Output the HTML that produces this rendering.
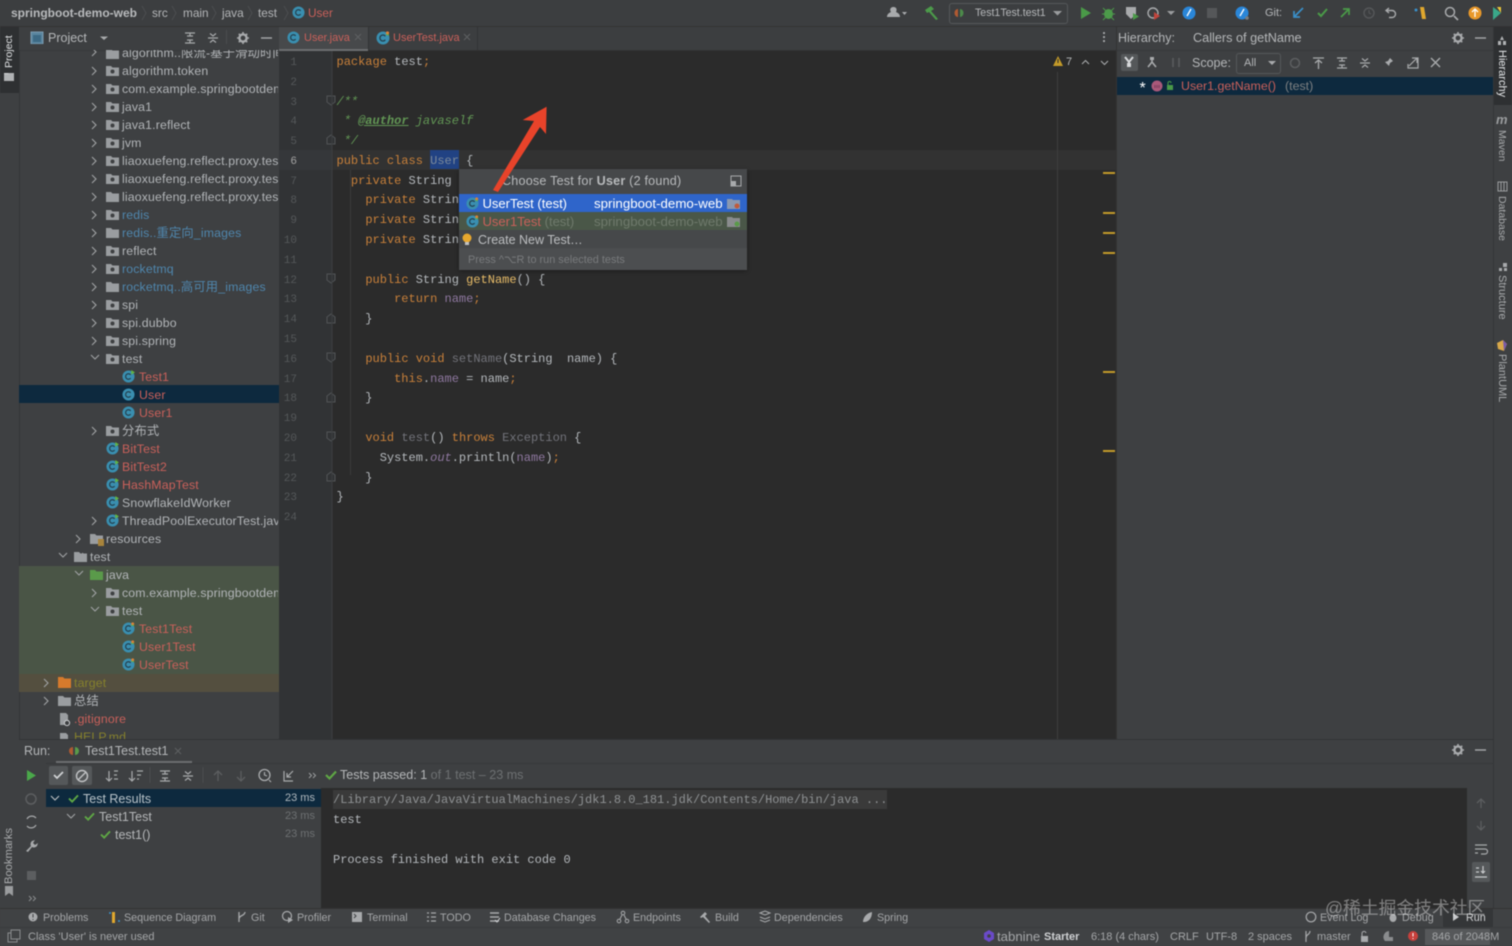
<!DOCTYPE html>
<html><head><meta charset="utf-8"><title>IDE</title>
<style>
html,body{margin:0;padding:0;background:#3e4042}
body{width:1512px;height:945px;overflow:hidden;position:relative;font-family:"Liberation Sans","Noto Sans CJK SC",sans-serif;font-size:12px;color:#b4b6b8;filter:blur(.45px)}
.b{position:absolute}
.t{position:absolute;white-space:nowrap;line-height:18px;height:18px}
.tr .t{font-size:12.3px;letter-spacing:.15px;color:#b2b5b8}
.r{color:#c9605a!important}.bl{color:#4f86ad!important}.ol{color:#86812c!important}
.c{position:absolute;white-space:pre;font-family:"Liberation Mono",monospace;font-size:12px;line-height:20px;height:20px;color:#b4b8bc;left:336.5px;margin-top:.6px}
.k{color:#c8803a}.f{color:#8f78a0}.m{color:#e8bc68}.d{color:#72737a}.g{color:#629755;font-style:italic}
.n{position:absolute;left:279px;width:18px;margin-top:1.5px;text-align:right;font-family:"Liberation Mono",monospace;font-size:11px;line-height:20px;color:#55585a}
.s{font-size:10.75px;line-height:18px;height:18px;color:#a4a6a8;position:absolute;white-space:nowrap;margin-top:.5px}
svg.i{position:absolute;left:0;top:0;z-index:5;pointer-events:none}
</style></head><body>
<!-- panels -->
<div class="b" style="left:0;top:0;width:1512px;height:26px;background:#3c3e40;border-bottom:1px solid #333"></div>
<div class="b" style="left:0;top:27px;width:19px;height:881px;background:#3e4042;border-right:1px solid #343638"></div>
<div class="b" style="left:0;top:27px;width:19px;height:66px;background:#2e3032"></div>
<div class="b" style="left:19px;top:27px;width:260px;height:23px;background:#3d3f41;border-bottom:1px solid #37393b"></div>
<div class="b" style="left:279px;top:27px;width:837px;height:23px;background:#3c3e40;border-bottom:1px solid #323232"></div>
<div class="b" style="left:279px;top:27px;width:89px;height:22px;background:#47494b;border-bottom:2px solid #6c6e70"></div>
<div class="b" style="left:368px;top:27px;width:1px;height:23px;background:#323436"></div>
<div class="b" style="left:477px;top:27px;width:1px;height:23px;background:#323436"></div>
<!-- editor -->
<div class="b" style="left:279px;top:51px;width:837px;height:688px;background:#2b2b2b"></div>
<div class="b" style="left:279px;top:51px;width:53px;height:688px;background:#313335"></div>
<div class="b" style="left:279px;top:150px;width:837px;height:20px;background:#323232"></div>
<div class="b" style="left:279px;top:150px;width:53px;height:20px;background:#35373a"></div>
<div class="b" style="left:430px;top:150px;width:29px;height:19px;background:#214283"></div>
<div class="b" style="left:1057px;top:72px;width:1px;height:667px;background:#3e3e3e"></div>
<div class="b" style="left:350px;top:170px;width:1px;height:305px;background:#3a3a3a"></div>
<div class="b" style="left:1103px;top:172px;width:12px;height:2px;background:#c39a29"></div>
<div class="b" style="left:1103px;top:212px;width:12px;height:2px;background:#c39a29"></div>
<div class="b" style="left:1103px;top:232px;width:12px;height:2px;background:#c39a29"></div>
<div class="b" style="left:1103px;top:252px;width:12px;height:2px;background:#c39a29"></div>
<div class="b" style="left:1103px;top:371px;width:12px;height:2px;background:#c39a29"></div>
<div class="b" style="left:1103px;top:450px;width:12px;height:2px;background:#c39a29"></div>
<!-- hierarchy -->
<div class="b" style="left:1116px;top:27px;width:377px;height:712px;background:#3e4042;border-left:1px solid #333"></div>
<div class="b" style="left:1117px;top:50px;width:376px;height:1px;background:#37393b"></div>
<div class="b" style="left:1117px;top:77px;width:376px;height:18px;background:#0d293e"></div>
<div class="b" style="left:1121px;top:54px;width:17px;height:17px;background:#55585a;border-radius:2px"></div>
<div class="b" style="left:1493px;top:27px;width:19px;height:881px;background:#3e4042;border-left:1px solid #343638"></div>
<div class="b" style="left:1494px;top:27px;width:18px;height:78px;background:#2e3032"></div>
<!-- line numbers -->
<div class="n" style="top:51px">1</div><div class="n" style="top:71px">2</div><div class="n" style="top:91px">3</div><div class="n" style="top:110px">4</div><div class="n" style="top:130px">5</div><div class="n" style="top:150px;color:#a4a3a3">6</div><div class="n" style="top:170px">7</div><div class="n" style="top:189px">8</div><div class="n" style="top:209px">9</div><div class="n" style="top:229px">10</div><div class="n" style="top:249px">11</div><div class="n" style="top:269px">12</div><div class="n" style="top:288px">13</div><div class="n" style="top:308px">14</div><div class="n" style="top:328px">15</div><div class="n" style="top:348px">16</div><div class="n" style="top:368px">17</div><div class="n" style="top:387px">18</div><div class="n" style="top:407px">19</div><div class="n" style="top:427px">20</div><div class="n" style="top:447px">21</div><div class="n" style="top:467px">22</div><div class="n" style="top:486px">23</div><div class="n" style="top:506px">24</div>
<!-- code -->
<div class="c" style="top:51px"><span class="k">package</span> test<span class="k">;</span></div>
<div class="c" style="top:91px"><span class="g">/**</span></div>
<div class="c" style="top:110px"><span class="g"> * <b style="text-decoration:underline">@author</b> javaself</span></div>
<div class="c" style="top:130px"><span class="g"> */</span></div>
<div class="c" style="top:150px"><span class="k">public class</span> <span style="color:#7c8a9a">User</span> {</div>
<div class="c" style="top:170px">  <span class="k">private</span> String</div>
<div class="c" style="top:189px">    <span class="k">private</span> Strin</div>
<div class="c" style="top:209px">    <span class="k">private</span> Strin</div>
<div class="c" style="top:229px">    <span class="k">private</span> Strin</div>
<div class="c" style="top:269px">    <span class="k">public</span> String <span class="m">getName</span>() {</div>
<div class="c" style="top:288px">        <span class="k">return</span> <span class="f">name</span><span class="k">;</span></div>
<div class="c" style="top:308px">    }</div>
<div class="c" style="top:348px">    <span class="k">public void</span> <span class="d">setName</span>(String  name) {</div>
<div class="c" style="top:368px">        <span class="k">this</span>.<span class="f">name</span> = name<span class="k">;</span></div>
<div class="c" style="top:387px">    }</div>
<div class="c" style="top:427px">    <span class="k">void</span> <span class="d">test</span>() <span class="k">throws</span> <span class="d">Exception</span> {</div>
<div class="c" style="top:447px">      System.<span class="f" style="font-style:italic">out</span>.println(<span class="f">name</span>)<span class="k">;</span></div>
<div class="c" style="top:467px">    }</div>
<div class="c" style="top:486px">}</div>
<!-- top bar text -->
<div class="t" style="left:11px;top:4px;font-size:12px;font-weight:bold;color:#b8babc">springboot-demo-web</div>
<div class="t" style="left:152px;top:4px;font-size:11.8px">src</div>
<div class="t" style="left:183px;top:4px;font-size:11.8px">main</div>
<div class="t" style="left:222px;top:4px;font-size:11.8px">java</div>
<div class="t" style="left:258px;top:4px;font-size:11.8px">test</div>
<div class="t r" style="left:308px;top:4px;font-size:11.8px">User</div>
<div class="b" style="left:949px;top:3px;width:117px;height:19px;border:1px solid #55585a;border-radius:3px"></div>
<div class="t" style="left:975px;top:4px;font-size:10.6px">Test1Test.test1</div>
<div class="t" style="left:1265px;top:4px;font-size:11px">Git:</div>
<!-- project header -->
<div class="t" style="left:48px;top:29px;font-size:12.5px">Project</div>
<div class="t r" style="left:304px;top:29px;font-size:11px">User.java</div>
<div class="t r" style="left:393px;top:29px;font-size:11px">UserTest.java</div>
<div class="t" style="left:1118px;top:29px;font-size:12.5px">Hierarchy:</div>
<div class="t" style="left:1193px;top:29px;font-size:12.7px">Callers of getName</div>
<div class="t" style="left:1066px;top:53px;font-size:11px">7</div>
<div class="t" style="left:1192px;top:54px;font-size:12.5px">Scope:</div>
<div class="b" style="left:1236px;top:53px;width:43px;height:19px;border:1px solid #55585a;border-radius:3px"></div>
<div class="t" style="left:1244px;top:54px;font-size:11px">All</div>
<div class="t r" style="left:1181px;top:77px;font-size:12.4px">User1.getName()</div>
<div class="t" style="left:1285px;top:77px;font-size:12.4px;color:#7d8082">(test)</div>
<!-- vertical labels -->
<div class="t" style="left:0;top:26px;width:19px;height:42px;writing-mode:vertical-rl;transform:rotate(180deg);font-size:10.5px;line-height:19px;color:#e0e2e4;text-align:left">Project</div>
<div class="t" style="left:0;top:828px;width:19px;height:56px;writing-mode:vertical-rl;transform:rotate(180deg);font-size:11.2px;line-height:19px;color:#a8aaac">Bookmarks</div>
<div class="t" style="left:1493px;top:50px;width:18px;height:50px;writing-mode:vertical-rl;font-size:11px;line-height:18px;color:#e4e6e8">Hierarchy</div>
<div class="t" style="left:1493px;top:130px;width:18px;height:40px;writing-mode:vertical-rl;font-size:10.5px;line-height:18px;color:#a8aaac">Maven</div>
<div class="t" style="left:1493px;top:196px;width:18px;height:50px;writing-mode:vertical-rl;font-size:10.5px;line-height:18px;color:#a8aaac">Database</div>
<div class="t" style="left:1493px;top:275px;width:18px;height:50px;writing-mode:vertical-rl;font-size:11px;line-height:18px;color:#a8aaac">Structure</div>
<div class="t" style="left:1493px;top:354px;width:18px;height:50px;writing-mode:vertical-rl;font-size:11px;line-height:18px;color:#a8aaac">PlantUML</div>
<!-- project tree backgrounds -->
<div class="b" style="left:19px;top:385px;width:260px;height:18px;background:#0d293e"></div>
<div class="b" style="left:19px;top:566px;width:260px;height:108px;background:#4a5546"></div>
<div class="b" style="left:19px;top:674px;width:260px;height:18px;background:#544f3f"></div>
<!-- project tree -->
<div class="b tr" style="left:0;top:0;width:278px;height:739px;clip-path:inset(50px 0 0 19px);overflow:hidden">
<div class="t" style="left:122px;top:44px">algorithm..限流-基于滑动时间窗口</div>
<div class="t" style="left:122px;top:62px">algorithm.token</div>
<div class="t" style="left:122px;top:80px">com.example.springbootdemo</div>
<div class="t" style="left:122px;top:98px">java1</div>
<div class="t" style="left:122px;top:116px">java1.reflect</div>
<div class="t" style="left:122px;top:134px">jvm</div>
<div class="t" style="left:122px;top:152px">liaoxuefeng.reflect.proxy.test</div>
<div class="t" style="left:122px;top:170px">liaoxuefeng.reflect.proxy.test</div>
<div class="t" style="left:122px;top:188px">liaoxuefeng.reflect.proxy.test</div>
<div class="t bl" style="left:122px;top:206px">redis</div>
<div class="t bl" style="left:122px;top:224px">redis..重定向_images</div>
<div class="t" style="left:122px;top:242px">reflect</div>
<div class="t bl" style="left:122px;top:260px">rocketmq</div>
<div class="t bl" style="left:122px;top:278px">rocketmq..高可用_images</div>
<div class="t" style="left:122px;top:296px">spi</div>
<div class="t" style="left:122px;top:314px">spi.dubbo</div>
<div class="t" style="left:122px;top:332px">spi.spring</div>
<div class="t" style="left:122px;top:350px">test</div>
<div class="t r" style="left:139px;top:368px">Test1</div>
<div class="t r" style="left:139px;top:386px">User</div>
<div class="t r" style="left:139px;top:404px">User1</div>
<div class="t" style="left:122px;top:422px">分布式</div>
<div class="t r" style="left:122px;top:440px">BitTest</div>
<div class="t r" style="left:122px;top:458px">BitTest2</div>
<div class="t r" style="left:122px;top:476px">HashMapTest</div>
<div class="t" style="left:122px;top:494px">SnowflakeIdWorker</div>
<div class="t" style="left:122px;top:512px">ThreadPoolExecutorTest.java</div>
<div class="t" style="left:106px;top:530px">resources</div>
<div class="t" style="left:90px;top:548px">test</div>
<div class="t" style="left:106px;top:566px">java</div>
<div class="t" style="left:122px;top:584px">com.example.springbootdemo</div>
<div class="t" style="left:122px;top:602px">test</div>
<div class="t r" style="left:139px;top:620px">Test1Test</div>
<div class="t r" style="left:139px;top:638px">User1Test</div>
<div class="t r" style="left:139px;top:656px">UserTest</div>
<div class="t ol" style="left:74px;top:674px">target</div>
<div class="t" style="left:74px;top:692px">总结</div>
<div class="t r" style="left:74px;top:710px">.gitignore</div>
<div class="t ol" style="left:74px;top:728px">HELP.md</div>
</div>
<!-- run panel -->
<div class="b" style="left:19px;top:739px;width:1474px;height:169px;background:#3e4042;border-top:1px solid #323436"></div>
<div class="b" style="left:56px;top:761px;width:136px;height:2px;background:#6c6e70"></div>
<div class="b" style="left:46px;top:763px;width:1447px;height:1px;background:#37393b"></div>
<div class="b" style="left:321px;top:788px;width:1146px;height:120px;background:#2b2b2b"></div>
<div class="b" style="left:333px;top:790px;width:554px;height:19px;background:#3a3a3a"></div>
<div class="b" style="left:46px;top:789px;width:275px;height:18px;background:#0d293e"></div>
<div class="b" style="left:49px;top:766px;width:19px;height:19px;background:#55585a;border-radius:2px"></div>
<div class="b" style="left:72px;top:766px;width:20px;height:19px;background:#55585a;border-radius:2px"></div>
<div class="b" style="left:1472px;top:862px;width:18px;height:20px;background:#55585a;border-radius:2px"></div>
<div class="t" style="left:24px;top:742px;font-size:12.5px">Run:</div>
<div class="t" style="left:85px;top:742px;font-size:12.5px">Test1Test.test1</div>
<div class="t" style="left:340px;top:766px;font-size:12.55px">Tests passed: 1 <span style="color:#6d7072">of 1 test – 23 ms</span></div>
<div class="t" style="left:83px;top:790px;font-size:12.5px;color:#b8c2c8">Test Results</div>
<div class="t" style="left:99px;top:808px;font-size:12.5px">Test1Test</div>
<div class="t" style="left:115px;top:826px;font-size:12.5px">test1()</div>
<div class="t" style="left:285px;top:789px;font-size:11px;color:#b0b8be">23 ms</div>
<div class="t" style="left:285px;top:807px;font-size:11px;color:#6d7072">23 ms</div>
<div class="t" style="left:285px;top:825px;font-size:11px;color:#6d7072">23 ms</div>
<div class="c" style="left:333px;top:789px;color:#8f9294">/Library/Java/JavaVirtualMachines/jdk1.8.0_181.jdk/Contents/Home/bin/java ...</div>
<div class="c" style="left:333px;top:809px">test</div>
<div class="c" style="left:333px;top:849px">Process finished with exit code 0</div>
<!-- bottom bars -->
<div class="b" style="left:0;top:908px;width:1512px;height:37px;background:#404244;border-top:1px solid #333"></div>
<div class="b" style="left:1443px;top:909px;width:50px;height:18px;background:#343638"></div>
<div class="b" style="left:0;top:927px;width:1512px;height:1px;background:#3a3c3e"></div>
<div class="b" style="left:1425px;top:929px;width:65px;height:16px;background:#56585a"></div>
<div class="s" style="left:43px;top:908px">Problems</div>
<div class="s" style="left:124px;top:908px">Sequence Diagram</div>
<div class="s" style="left:251px;top:908px">Git</div>
<div class="s" style="left:297px;top:908px">Profiler</div>
<div class="s" style="left:367px;top:908px">Terminal</div>
<div class="s" style="left:440px;top:908px">TODO</div>
<div class="s" style="left:504px;top:908px">Database Changes</div>
<div class="s" style="left:633px;top:908px">Endpoints</div>
<div class="s" style="left:715px;top:908px">Build</div>
<div class="s" style="left:774px;top:908px">Dependencies</div>
<div class="s" style="left:877px;top:908px">Spring</div>
<div class="s" style="left:1320px;top:908px">Event Log</div>
<div class="s" style="left:1402px;top:908px">Debug</div>
<div class="s" style="left:1466px;top:908px;color:#d0d2d4">Run</div>
<div class="s" style="left:28px;top:927px;font-size:11px">Class 'User' is never used</div>
<div class="s" style="left:997px;top:927px;font-size:13.2px">tabnine</div>
<div class="s" style="left:1044px;top:927px;font-size:11px;font-weight:bold;color:#cfd1d3">Starter</div>
<div class="s" style="left:1091px;top:927px;font-size:11px">6:18 (4 chars)</div>
<div class="s" style="left:1170px;top:927px;font-size:11px">CRLF</div>
<div class="s" style="left:1206px;top:927px;font-size:11px">UTF-8</div>
<div class="s" style="left:1248px;top:927px;font-size:11px">2 spaces</div>
<div class="s" style="left:1317px;top:927px;font-size:11px">master</div>
<div class="s" style="left:1432px;top:927px;font-size:11px">846 of 2048M</div>
<!-- icons -->
<svg class="i" width="1512" height="945" viewBox="0 0 1512 945" fill="none">
<defs>
<symbol id="fo" viewBox="0 0 13 11" overflow="visible"><path d="M0 1h5l1.5 1.5H13V11H0z" fill="#9a9da0"/></symbol>
<symbol id="pk" viewBox="0 0 13 11" overflow="visible"><path d="M0 1h5l1.5 1.5H13V11H0z" fill="#9a9da0"/><circle cx="6.5" cy="6.500" r="2" fill="#3d3f41"/></symbol>
<symbol id="cl" viewBox="0 0 14 14" overflow="visible"><circle cx="7" cy="7" r="6.5" fill="#3a8fb0"/><path d="M9.3 5.2a3 3 0 1 0 0 3.6" stroke="#24404e" stroke-width="1.3"/></symbol>
<symbol id="cr" viewBox="0 0 14 14" overflow="visible"><circle cx="7" cy="7" r="6.5" fill="#3a8fb0"/><path d="M9.3 5.2a3 3 0 1 0 0 3.6" stroke="#24404e" stroke-width="1.3"/><path d="M10 0l4 2.500-4 2.500z" fill="#62b543"/></symbol>
<symbol id="co" viewBox="0 0 14 14" overflow="visible"><circle cx="7" cy="7" r="6.5" fill="#3a8fb0"/><path d="M9.3 5.2a3 3 0 1 0 0 3.6" stroke="#24404e" stroke-width="1.3"/><circle cx="11.5" cy="2" r="1.6" fill="#d9823a"/><path d="M10 3.5l3 .5" stroke="#62b543"/></symbol>
<symbol id="gear" viewBox="0 0 12 12" overflow="visible"><circle cx="6" cy="6" r="3.6" stroke="#a8aaac" stroke-width="2.4"/><path d="M6 0v2.4M6 9.6V12M0 6h2.4M9.6 6H12M1.8 1.8l1.7 1.7M8.5 8.5l1.7 1.7M10.2 1.8L8.5 3.5M3.5 8.5l-1.7 1.7" stroke="#a8aaac" stroke-width="1.6"/></symbol>
<symbol id="ck" viewBox="0 0 12 10" overflow="visible"><path d="M1 5l3.500 3.500L11 1.500" stroke="#5fa845" stroke-width="2.100"/></symbol>
<symbol id="ca" viewBox="0 0 12 12" overflow="visible"><path d="M1 1h10M1 11h10M3 4h6M3 8h6M6 1.500v3M6 7.500v3" stroke="#a8aaac" stroke-width="1.200"/></symbol>
<symbol id="ce" viewBox="0 0 12 12" overflow="visible"><path d="M1 6h10M3 1.500L6 4l3-2.500M3 10.500L6 8l3 2.500" stroke="#a8aaac" stroke-width="1.200"/></symbol>
</defs>
<!-- breadcrumb chevrons -->
<g stroke="#4c4e50" stroke-width="1"><path d="M142 6l4 7-4 7M172 6l4 7-4 7M212 6l4 7-4 7M248 6l4 7-4 7M284 6l4 7-4 7"/></g>
<use href="#cl" x="292" y="6" width="13" height="13"/>
<!-- toolbar -->
<path d="M887 17c0-3 2-4 4-5-2-3 0-5 2.500-5s4 2 2.500 5c2 1 4 2 4 5z" fill="#a8aaac"/><path d="M902 12l5 0-2.500 3z" fill="#a8aaac"/>
<path d="M925 10l6-4 3 3-3 2 7 8-2 1-7-8-2 1z" fill="#4c9a4a"/>
<path d="M958 9a3.500 4 0 0 0 0 8z" fill="#b05a32"/><path d="M960 9a3.500 4 0 0 1 0 8z" fill="#4c8a4a"/>
<path d="M1053 11h9l-4.500 4.500z" fill="#9a9c9e"/>
<path d="M1081 7l10 6-10 6z" fill="#4a9a48"/>
<ellipse cx="1108.500" cy="14" rx="4.500" ry="5" fill="#4c9a4a"/><path d="M1103 8l3 3M1114 8l-3 3M1102 14h3M1112 14h3M1103 20l3-3M1114 20l-3-3" stroke="#4c9a4a"/>
<path d="M1126 7h10v7l-5 5-5-5z" fill="#a8aaac"/><path d="M1133 13l6 3.500-6 3.500z" fill="#4a9a48"/>
<circle cx="1153" cy="13" r="5" stroke="#a8aaac" stroke-width="1.400"/><path d="M1154 12l6 4-6 4z" fill="#c0443c"/>
<path d="M1167 11h8l-4 4z" fill="#9a9c9e"/>
<circle cx="1189" cy="13" r="6.500" fill="#2a86d8"/><path d="M1187 16l4-7" stroke="#fff" stroke-width="1.300"/>
<rect x="1207" y="8" width="10" height="10" fill="#555759"/>
<circle cx="1242" cy="13" r="6.500" fill="#2a86d8"/><path d="M1240 16l4-7" stroke="#fff" stroke-width="1.300"/><circle cx="1247" cy="18" r="1.800" fill="#7a7c7e"/>
<path d="M1303 8l-8 8M1294 11v6h6" stroke="#3a8fc8" stroke-width="1.700"/>
<path d="M1318 13l3 3 6-7" stroke="#4a9a48" stroke-width="2"/>
<path d="M1341 17l8-8M1343 9h6v6" stroke="#4a9a48" stroke-width="1.700"/>
<circle cx="1369" cy="13" r="5" stroke="#555759" stroke-width="1.400"/><path d="M1369 10v3l2 1" stroke="#555759"/>
<path d="M1389 8l-3 2.500 3 2.500M1386 10.500h6a3.500 3.500 0 0 1 0 7h-3" stroke="#a8aaac" stroke-width="1.400"/>
<path d="M1420 7h4l2 12h-4z" fill="#e0a82e"/><circle cx="1416" cy="10" r="1.500" fill="#3a8fc8"/>
<circle cx="1450" cy="12" r="4.500" stroke="#a8aaac" stroke-width="1.500"/><path d="M1454 16l4 4" stroke="#a8aaac" stroke-width="1.700"/>
<circle cx="1475" cy="13" r="6.500" fill="#e8982a"/><path d="M1475 17V9M1472 12l3-3 3 3" stroke="#fff" stroke-width="1.300"/>
<path d="M1493 7l8 6-8 7z" fill="#3aa88a"/><path d="M1497 7h4v6z" fill="#e8c53a"/>
<!-- project header icons -->
<rect x="31" y="32" width="12" height="12" fill="#5a86a0" stroke="#7a9ab0"/><rect x="33" y="35" width="8" height="7" fill="#3d6a85"/>
<path d="M100 36.500h8l-4 3.500z" fill="#a8aaac"/>
<use href="#ca" x="184" y="32" width="12" height="12"/><use href="#ce" x="207" y="32" width="12" height="12"/>
<path d="M226.500 30v16" stroke="#4a4c4e"/>
<use href="#gear" x="237" y="32" width="12" height="12"/><path d="M261 38h11" stroke="#a8aaac" stroke-width="1.400"/>
<!-- tab icons -->
<use href="#cl" x="287" y="31" width="13" height="13"/><use href="#co" x="376" y="31" width="14" height="14"/>
<path d="M355 34l6 6M361 34l-6 6M464 34l6 6M470 34l-6 6" stroke="#5e6062"/>
<path d="M1104 33v.1M1104 37v.1M1104 41v.1" stroke="#b0b2b4" stroke-width="2" stroke-linecap="round"/>
<!-- fold markers -->
<g stroke="#515456" fill="#313335"><path d="M327 96h8v6l-4 3-4-3zM327 144h8v-6l-4-3-4 3zM327 274h8v6l-4 3-4-3zM327 323h8v-6l-4-3-4 3zM327 353h8v6l-4 3-4-3zM327 402h8v-6l-4-3-4 3zM327 432h8v6l-4 3-4-3zM327 481h8v-6l-4-3-4 3z"/></g>
<path d="M332 51v688" stroke="#3d3f41"/>
<!-- warnings -->
<path d="M1058 56l5 10h-10z" fill="#c39a29"/><path d="M1058 59v4" stroke="#2b2b2b"/>
<path d="M1082 64l3.500-3.500 3.500 3.500M1101 61l3.500 3.500 3.500-3.500" stroke="#a8aaac" stroke-width="1.100"/>
<!-- tree -->
<g stroke="#a0a2a4" stroke-width="1.100">
<path d="M92 48l4 4-4 4M92 67l4 4-4 4M92 85l4 4-4 4M92 103l4 4-4 4M92 121l4 4-4 4M92 139l4 4-4 4M92 157l4 4-4 4M92 175l4 4-4 4M92 193l4 4-4 4M92 211l4 4-4 4M92 229l4 4-4 4M92 247l4 4-4 4M92 265l4 4-4 4M92 283l4 4-4 4M92 301l4 4-4 4M92 319l4 4-4 4M92 337l4 4-4 4M92 427l4 4-4 4M92 517l4 4-4 4M76 535l4 4-4 4M92 589l4 4-4 4M44 679l4 4-4 4M44 697l4 4-4 4"/>
<path d="M91 357l4 4 4-4M75 555l4 4 4-4M59 555l4 4 4-4M75 573l4 4 4-4M91 609l4 4 4-4" transform="translate(0,-2)"/>
</g>
<use href="#fo" x="106" y="48" width="13" height="11"/>
<use href="#pk" x="106" y="65" width="13" height="11"/><use href="#pk" x="106" y="83" width="13" height="11"/><use href="#pk" x="106" y="101" width="13" height="11"/><use href="#pk" x="106" y="119" width="13" height="11"/><use href="#pk" x="106" y="137" width="13" height="11"/><use href="#pk" x="106" y="155" width="13" height="11"/><use href="#pk" x="106" y="173" width="13" height="11"/><use href="#fo" x="106" y="191" width="13" height="11"/><use href="#pk" x="106" y="209" width="13" height="11"/><use href="#fo" x="106" y="227" width="13" height="11"/><use href="#pk" x="106" y="245" width="13" height="11"/><use href="#pk" x="106" y="263" width="13" height="11"/><use href="#fo" x="106" y="281" width="13" height="11"/><use href="#pk" x="106" y="299" width="13" height="11"/><use href="#pk" x="106" y="317" width="13" height="11"/><use href="#pk" x="106" y="335" width="13" height="11"/><use href="#pk" x="106" y="353" width="13" height="11"/><use href="#pk" x="106" y="425" width="13" height="11"/><use href="#pk" x="106" y="587" width="13" height="11"/><use href="#pk" x="106" y="605" width="13" height="11"/>
<rect x="19" y="44" width="260" height="6" fill="#3d3f41"/>
<use href="#cr" x="122" y="370" width="13" height="13"/><use href="#cl" x="122" y="388" width="13" height="13"/><use href="#cl" x="122" y="406" width="13" height="13"/>
<use href="#cr" x="106" y="442" width="13" height="13"/><use href="#cr" x="106" y="460" width="13" height="13"/><use href="#cr" x="106" y="478" width="13" height="13"/><use href="#cr" x="106" y="496" width="13" height="13"/><use href="#cr" x="106" y="514" width="13" height="13"/>
<use href="#fo" x="90" y="533" width="13" height="11"/><rect x="98" y="539" width="6" height="7" fill="#a8843c"/>
<use href="#fo" x="74" y="551" width="13" height="11"/>
<path d="M90 570h5l1.500 1.500H103V580H90z" fill="#5a9a4a"/>
<use href="#co" x="122" y="622" width="13" height="13"/><use href="#co" x="122" y="640" width="13" height="13"/><use href="#co" x="122" y="658" width="13" height="13"/>
<path d="M58 677h5l1.500 1.500H71V688H58z" fill="#d67a2c"/>
<use href="#fo" x="58" y="695" width="13" height="11"/>
<path d="M60 713h6l2 2v5h1v5h-9z" fill="#9a9da0"/><circle cx="67" cy="723" r="2.600" stroke="#c8cacc" fill="#3d3f41"/>
<path d="M60 739v-6h6l2 2v4z" fill="#9a9da0"/>
<!-- hierarchy icons -->
<use href="#gear" x="1452" y="32" width="12" height="12"/><path d="M1475 38h11" stroke="#a8aaac" stroke-width="1.400"/>
<path d="M1125 57l4 5 4-5M1129 62v4" stroke="#d6d8da" stroke-width="2"/><rect x="1127" y="63" width="4" height="4" fill="#d6d8da"/>
<path d="M1152 58v4M1148 67l4-5 4 5" stroke="#a8aaac" stroke-width="1.600"/><rect x="1150" y="57" width="4" height="3" fill="#a8aaac"/>
<path d="M1173 58v9M1179 58v9" stroke="#5c5e60" stroke-width="1.500"/>
<path d="M1268 61h8l-4 4z" fill="#a8aaac"/>
<circle cx="1295" cy="63" r="4.500" stroke="#5c5e60" stroke-width="1.500"/>
<path d="M1313 58h11M1318.500 69v-8M1315 63l3.500-3 3.500 3" stroke="#a8aaac" stroke-width="1.300"/>
<use href="#ca" x="1336" y="57" width="12" height="12"/><use href="#ce" x="1359" y="57" width="12" height="12"/>
<path d="M1384 68l3-4-2-2 3-1 2-3 3 3-3 2-1 3-2-2z" fill="#a8aaac"/>
<path d="M1414 58h4v10h-10v-4M1409 66l8-8M1412 58h5v5" stroke="#a8aaac" stroke-width="1.200"/>
<path d="M1431 58l9 9M1440 58l-9 9" stroke="#a8aaac" stroke-width="1.400"/>
<text x="1139.500" y="93" font-size="16" fill="#fff" font-family="Liberation Sans">*</text>
<circle cx="1157" cy="86" r="5.500" fill="#a8587a"/><path d="M1155 88v-3m2 3v-3m2 3v-3" stroke="#6a3450" stroke-width=".8"/>
<rect x="1167" y="85" width="6" height="5" fill="#4a9a48"/><path d="M1168 85v-2a1.500 1.500 0 0 1 3 0" stroke="#4a9a48"/>
<!-- stripe icons -->
<rect x="4" y="73" width="10" height="8" fill="#b0b2b4"/><path d="M4 73h4l1 1H4z" fill="#d0d2d4"/>
<path d="M1502 36l-2 4h4zM1498 41h3v4h-3zM1503 41h3v4h-3z" fill="#b0b2b4"/>
<rect x="1498" y="182" width="9" height="9" fill="none" stroke="#9a9c9e"/><path d="M1501 182v9M1504 182v9" stroke="#9a9c9e"/>
<path d="M1503 263h4v4h-4zM1499 268h3v3h-3zM1504 268h3v3h-3z" fill="#a8aaac"/>
<path d="M1497 343l6-3 4 4-3 7-6-2z" fill="#d8a84a"/><path d="M1503 340l4 4-3 7z" fill="#7a5aa8"/>
<path d="M5 886h8v10l-4-3-4 3z" fill="#9a9c9e"/>
</svg>
<!-- italic m for maven as text -->
<div class="t" style="left:1496px;top:111px;font-size:13px;font-weight:bold;font-style:italic;color:#9a9c9e;z-index:6">m</div>
<!-- run icons -->
<svg class="i" width="1512" height="945" viewBox="0 0 1512 945" fill="none" style="z-index:6">
<path d="M73 747a4 4 0 0 0 0 8z" fill="#b05a32"/><path d="M75 747a4 4 0 0 1 0 8z" fill="#5a9a4a"/>
<path d="M175 748l6 6M181 748l-6 6" stroke="#5e6062"/>
<path d="M27 770l9 5.500-9 5.500z" fill="#4aa84a"/>
<path d="M54 775l3 3 6-6" stroke="#d0d2d4" stroke-width="1.700"/>
<circle cx="82" cy="776" r="5.500" stroke="#c0c2c4" stroke-width="1.400"/><path d="M78 780l8-8" stroke="#c0c2c4" stroke-width="1.400"/>
<path d="M109 771v10M106 778l3 3 3-3M114 771h4M114 775h3M114 779h4M132 771v10M129 778l3 3 3-3M137 771h6M137 775h4M137 779h2" stroke="#a8aaac" stroke-width="1.200"/>
<use href="#ca" x="159" y="770" width="12" height="12"/><use href="#ce" x="182" y="770" width="12" height="12"/>
<path d="M150 767v16M203 767v16" stroke="#4a4c4e"/>
<path d="M218 781v-10M214 775l4-4 4 4M241 771v10M237 777l4 4 4-4" stroke="#5c5e60" stroke-width="1.300"/>
<circle cx="264.500" cy="775" r="5.500" stroke="#a8aaac" stroke-width="1.300"/><path d="M264.500 772v3l2.500 1M269 780l2 2" stroke="#a8aaac" stroke-width="1.200"/>
<path d="M284 771v10h9M293 771l-6 6M287 773v4h4" stroke="#a8aaac" stroke-width="1.200"/>
<path d="M309 773l2.500 2.500-2.500 2.500M313 773l2.500 2.500-2.500 2.500" stroke="#9a9c9e"/>
<use href="#ck" x="325" y="770" width="12" height="10"/>
<use href="#ck" x="68" y="794" width="11" height="9"/><use href="#ck" x="84" y="812" width="11" height="9"/><use href="#ck" x="100" y="830" width="11" height="9"/>
<path d="M51 796l4 4 4-4" stroke="#c0c2c4" stroke-width="1.100"/><path d="M67 814l4 4 4-4" stroke="#a0a2a4" stroke-width="1.100"/>
<circle cx="31" cy="799" r="5" stroke="#5c5e60" stroke-width="1.500"/>
<path d="M27 819a5.500 5.500 0 0 1 9-1M36 825a5.500 5.500 0 0 1-9 1" stroke="#a8aaac" stroke-width="1.300"/>
<path d="M26 851l5-5a4 4 0 0 1 1-5l3-1-2 3 2 2 3-2-1 3a4 4 0 0 1-5 1l-4 5z" fill="#a8aaac"/>
<rect x="27" y="871" width="9" height="9" fill="#5c5e60"/>
<path d="M29 896l2.500 2.500-2.500 2.500M33 896l2.500 2.500-2.500 2.500" stroke="#8a8c8e"/>
<use href="#gear" x="1452" y="744" width="12" height="12"/><path d="M1475 750h11" stroke="#a8aaac" stroke-width="1.400"/>
<path d="M1481 808v-9M1477 803l4-4 4 4M1481 821v9M1477 826l4 4 4-4" stroke="#5c5e60" stroke-width="1.300"/>
<path d="M1475 845h12M1475 849h10a2 2 0 0 1 0 5h-4M1475 853h3" stroke="#a8aaac" stroke-width="1.200"/>
<path d="M1476 868h3M1476 872h3M1483 866v7M1481 871l2 2 2-2M1475 877h12" stroke="#c8cacc" stroke-width="1.200"/>
<!-- bottom icons -->
<circle cx="33" cy="917" r="4.500" fill="#a8aaac"/><path d="M33 914v3.500M33 919v1" stroke="#404244"/>
<path d="M112 912h3v11h-3z" fill="#e0a82e"/><circle cx="110" cy="913" r="1" fill="#3a8fc8"/><circle cx="119" cy="921" r="1" fill="#3a8fc8"/>
<path d="M239 912v10M245 912c0 4-6 3-6 7" stroke="#a8aaac" stroke-width="1.300"/>
<circle cx="287" cy="916" r="4.500" stroke="#a8aaac" stroke-width="1.200"/><path d="M288 917l5 3-5 3z" fill="#a8aaac"/>
<rect x="352" y="912" width="10" height="10" fill="#a8aaac"/><path d="M354 914l2 2-2 2" stroke="#404244"/>
<path d="M427 913h2M427 917h2M427 921h2M431 913h5M431 917h5M431 921h5" stroke="#a8aaac" stroke-width="1.200"/>
<path d="M490 913h9M490 917h9M490 921h9" stroke="#a8aaac" stroke-width="1.600"/><path d="M495 920l2 2 3-4" stroke="#cfd1d3"/>
<circle cx="619" cy="921" r="1.800" stroke="#a8aaac"/><circle cx="627" cy="921" r="1.800" stroke="#a8aaac"/><circle cx="623" cy="913" r="1.800" stroke="#a8aaac"/><path d="M620 919l2-4M626 919l-2-4" stroke="#a8aaac"/>
<path d="M700 917l5-5 2 2-2 2 5 6-1 1-6-6-2 1z" fill="#a8aaac"/>
<path d="M760 913l5-2 5 2-5 2zM760 917l5 2 5-2M760 920l5 2 5-2" stroke="#a8aaac"/>
<path d="M863 922c0-5 4-9 9-10 0 6-3 10-8 10z" fill="#a8aaac"/>
<circle cx="1311" cy="917" r="4.800" stroke="#a8aaac" stroke-width="1.200"/>
<ellipse cx="1393" cy="918" rx="3.500" ry="4" fill="#a8aaac"/>
<path d="M1453 913l6 4-6 4z" fill="#c8cacc"/>
<rect x="8" y="933" width="9" height="9" stroke="#8a8c8e"/><rect x="11" y="930" width="9" height="9" stroke="#8a8c8e" fill="#404244"/>
<path d="M984 933l5-3 5 3v6l-5 3-5-3z" fill="#6a4ac8"/><circle cx="989" cy="936" r="1.800" fill="#404244"/>
<path d="M1306 931v11M1310 931c0 4-4 3-4 7" stroke="#a8aaac" stroke-width="1.200"/>
<rect x="1361" y="936" width="7" height="6" fill="#a8aaac"/><path d="M1362 936v-2a2 2 0 0 1 4-1" stroke="#a8aaac"/>
<path d="M1389 931a6 6 0 0 0-4 10h8v-4h-4z" fill="#8a8c8e"/>
<circle cx="1413" cy="936" r="5" fill="#c7403c"/><path d="M1413 933v3.500M1413 938v1" stroke="#fff"/>
</svg>
<!-- popup -->
<div class="b" style="left:459px;top:169px;width:288px;height:101px;background:#46484a;z-index:7;box-shadow:0 1px 4px rgba(0,0,0,.35)">
<div class="b" style="left:0;top:25px;width:288px;height:18px;background:#2f65ca"></div>
<div class="b" style="left:0;top:43px;width:288px;height:18px;background:#4a5748"></div>
<div class="b" style="left:0;top:79px;width:288px;height:22px;background:#4c4e50"></div>
<div class="t" style="left:43px;top:3px;font-size:12.6px;letter-spacing:.2px;color:#b8babc">Choose Test for <b>User</b> (2 found)</div>
<div class="t" style="left:23.5px;top:26px;font-size:13px;color:#fff">UserTest (test)</div>
<div class="t" style="left:135px;top:26px;font-size:13.3px;color:#fff">springboot-demo-web</div>
<div class="t" style="left:23.5px;top:44px;font-size:13px;color:#c9605a">User1Test <span style="color:#6f7a6c">(test)</span></div>
<div class="t" style="left:135px;top:44px;font-size:13.3px;color:#6f7a6c">springboot-demo-web</div>
<div class="t" style="left:19px;top:62px;font-size:12.5px;color:#bcbec0">Create New Test…</div>
<div class="t" style="left:9px;top:82px;font-size:10.9px;color:#787a7c">Press ^⌥R to run selected tests</div>
</div>
<svg class="i" width="1512" height="945" viewBox="0 0 1512 945" fill="none" style="z-index:8">
<rect x="731" y="176" width="10" height="10" stroke="#a8aaac"/><rect x="731" y="181" width="5" height="5" fill="#a8aaac"/>
<use href="#co" x="466" y="197" width="13" height="13"/><use href="#co" x="466" y="215" width="13" height="13"/>
<path d="M727 199h5l1 1h7v9h-13z" fill="#8a98b0"/><circle cx="737" cy="206" r="2.500" fill="#c05a3a"/>
<path d="M727 217h5l1 1h7v9h-13z" fill="#8a8c8e"/><circle cx="737" cy="224" r="2.500" fill="#5a9a4a"/>
<circle cx="467" cy="238" r="4.500" fill="#e8a82e"/><rect x="465" y="242" width="4" height="3" fill="#c0c2c4"/>
<path d="M546.600 106.700L546 134L540 127L498 192L493 190L534 121L522.700 120z" fill="#e8432a"/>
</svg>
<!-- watermark -->
<div class="t" style="left:1325px;top:897px;height:22px;line-height:22px;font-size:17.800px;color:rgba(255,255,255,.4);z-index:9">@稀土掘金技术社区</div>
</body></html>
